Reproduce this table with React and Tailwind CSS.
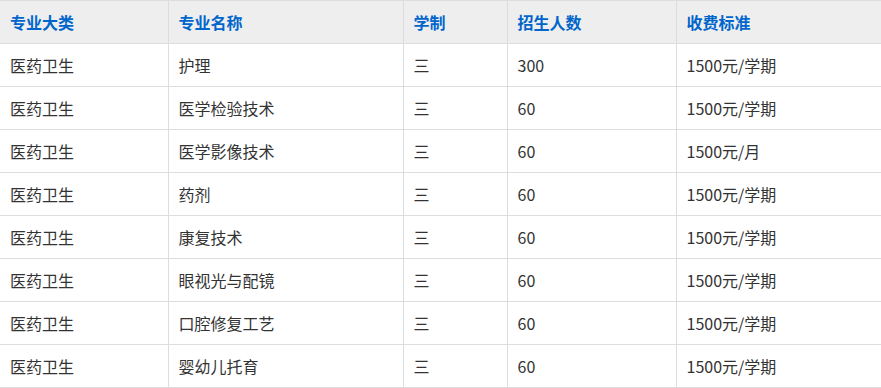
import React from 'react';

const rows = [
  ['医药卫生', '护理', '三', '300', '1500元/学期'],
  ['医药卫生', '医学检验技术', '三', '60', '1500元/学期'],
  ['医药卫生', '医学影像技术', '三', '60', '1500元/月'],
  ['医药卫生', '药剂', '三', '60', '1500元/学期'],
  ['医药卫生', '康复技术', '三', '60', '1500元/学期'],
  ['医药卫生', '眼视光与配镜', '三', '60', '1500元/学期'],
  ['医药卫生', '口腔修复工艺', '三', '60', '1500元/学期'],
  ['医药卫生', '婴幼儿托育', '三', '60', '1500元/学期'],
];

const heads = ['专业大类', '专业名称', '学制', '招生人数', '收费标准'];

export default function App() {
  return (
    <div className="w-[881px] bg-white" style={{ fontFamily: '"Microsoft YaHei", "Noto Sans CJK SC", sans-serif' }}>
      <table className="w-[881px] table-fixed border-collapse text-[16px] text-[#333]">
        <colgroup>
          <col className="w-[168px]" />
          <col className="w-[235px]" />
          <col className="w-[104px]" />
          <col className="w-[169px]" />
          <col className="w-[205px]" />
        </colgroup>
        <thead>
          <tr className="h-[43px] bg-[#eeeeee]">
            {heads.map((h) => (
              <th key={h} className="border border-[#dddddd] px-[10px] text-left font-bold text-[#0066cc] first:border-l-0">
                {h}
              </th>
            ))}
          </tr>
        </thead>
        <tbody>
          {rows.map((r, i) => (
            <tr key={i} className="h-[43px]">
              {r.map((c, j) => (
                <td key={j} className="border border-[#dddddd] px-[10px] first:border-l-0">
                  {c}
                </td>
              ))}
            </tr>
          ))}
        </tbody>
      </table>
    </div>
  );
}
